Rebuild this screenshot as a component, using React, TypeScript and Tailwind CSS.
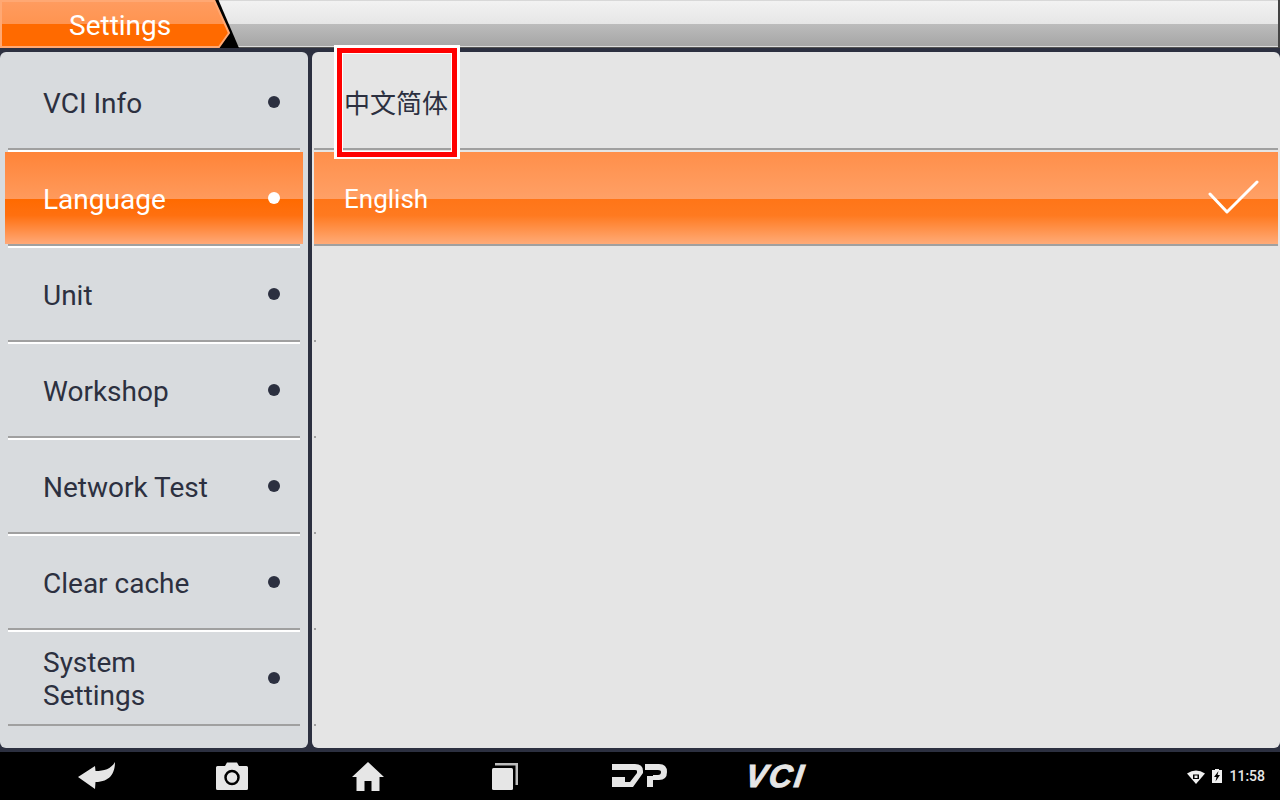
const rows = ["VCI Info", "Language", "Unit", "Workshop", "Network Test", "Clear cache", "System Settings"];

function Header() {
  return (
    <div className="flex h-[48px] border-r-2 border-[#444444] bg-[linear-gradient(180deg,#d8d8d8_0px,#d8d8d8_1px,#f2f2f2_1px,#e6e6e6_24px,#bcbcbc_24px,#a6a6a6_46px,#dcdcdc_46px,#dcdcdc_47px,#555555_47px)]">
      <div className="relative w-[240px] h-[48px] shrink-0">
        <svg width="240" height="48" viewBox="0 0 240 48" className="block">
          <defs>
            <linearGradient id="tab" gradientUnits="userSpaceOnUse" x1="0" y1="0" x2="0" y2="48">
              <stop offset="0" stopColor="#ff9c60" />
              <stop offset="0.5" stopColor="#ff9450" />
              <stop offset="0.5" stopColor="#ff6a00" />
              <stop offset="1" stopColor="#ff6a00" />
            </linearGradient>
          </defs>
          <polygon points="215,0 218.5,0 239,48 216,48" fill="#000000" />
          <polygon points="1,1 214.5,1 229,33 219,47 1,47" fill="url(#tab)" stroke="#ffa873" strokeWidth="2" strokeLinejoin="miter" />
        </svg>
        <span className="absolute left-[69px] top-[8px] text-[28px] leading-[36px] text-white font-['Roboto',sans-serif]">Settings</span>
      </div>
    </div>
  );
}

function Sidebar() {
  return (
    <div className="w-[308px] shrink-0 bg-[#d8dbde] rounded-[6px] pt-[2px] overflow-hidden">
      {rows.map((r, i) => {
        const active = i === 1;
        return (
          <div key={r} className="relative h-[96px] flex flex-col">
            <div className={i === 0 ? "h-[2px] mx-[8px]" : "h-[2px] mx-[8px] bg-white"} />
            <div
              className={
                active
                  ? "flex-1 flex items-center pl-[38px] pr-[23px] mx-[5px] text-white bg-[linear-gradient(180deg,#ff8438_0%,#ff9a5c_51%,#ff6a00_51%,#ff7010_69%,#ffa978_100%)]"
                  : "flex-1 flex items-center pl-[43px] pr-[28px] text-[#2c3040]"
              }
            >
              <span className="flex-1 pt-[2px] text-[28px] leading-[33px] w-[200px] font-['Roboto',sans-serif]">
                {r === "System Settings" ? <>System<br />Settings</> : r}
              </span>
              <div className={active ? "w-[12px] h-[12px] rounded-full bg-white" : "w-[12px] h-[12px] rounded-full bg-[#2c3040]"} />
            </div>
            <div className="h-[2px] mx-[8px] bg-[#a0a0a0]" />
          </div>
        );
      })}
    </div>
  );
}

function Content() {
  return (
    <div className="flex-1 bg-[#e5e5e5] rounded-[6px] pt-[2px] overflow-hidden">
      <div className="h-[96px] flex flex-col px-[2px]">
        <div className="flex-1 flex items-center pl-[30px] pt-[6px] text-[26px] text-[#2c3040] font-['Roboto','Noto_Sans_CJK_SC',sans-serif]">中文简体</div>
        <div className="h-[2px] bg-[#a0a0a0]" />
      </div>
      <div className="h-[96px] flex flex-col px-[2px]">
        <div className="flex-1 mt-[2px] flex items-center justify-between pl-[30px] pr-[18px] text-[26px] text-white bg-[linear-gradient(180deg,#ff8f4a_0%,#ffa066_51%,#ff7518_51%,#ff7a20_69%,#ffab78_100%)] font-['Roboto',sans-serif]">
          <span className="pt-[2px]">English</span>
          <svg width="52" height="36" viewBox="0 0 52 36" fill="none">
            <path d="M2 14 L19 32 L49 2" stroke="#fff" strokeWidth="3" strokeLinecap="round" strokeLinejoin="round" />
          </svg>
        </div>
        <div className="h-[2px] bg-[#a0a0a0]" />
      </div>
      {[0, 1, 2, 3, 4].map((n) => (
        <div key={n} className="h-[96px] flex flex-col justify-end px-[2px]">
          <div className="h-[2px] w-[2px] bg-[#a0a0a0]" />
        </div>
      ))}
    </div>
  );
}

function BottomBar() {
  return (
    <div className="h-[48px] bg-black flex items-center">
      <div className="w-[164px] flex justify-center pl-[30px] pr-0">
        <svg width="38" height="28" viewBox="0 0 38 28" fill="#e6e6e6">
          <path d="M0 15 L17 4 L17.5 9 C26 9 33 7 37 0 C37 11 32 20 17.5 20 L17 27 Z" />
        </svg>
      </div>
      <div className="w-[136px] flex justify-center">
        <svg width="32" height="28" viewBox="0 0 32 28">
          <path d="M1.5 4 H9 L11 0.5 H21 L23 4 H30.5 A1.5 1.5 0 0 1 32 5.5 V26.5 A1.5 1.5 0 0 1 30.5 28 H1.5 A1.5 1.5 0 0 1 0 26.5 V5.5 A1.5 1.5 0 0 1 1.5 4 Z" fill="#e6e6e6" />
          <circle cx="16" cy="15.5" r="6.5" fill="#e6e6e6" stroke="#000" strokeWidth="2.5" />
        </svg>
      </div>
      <div className="w-[136px] flex justify-center">
        <svg width="32" height="29" viewBox="0 0 32 29" fill="#e6e6e6">
          <path d="M16 0 L32 15 H27.5 V29 H19.5 V19 H12.5 V29 H4.5 V15 H0 Z" />
        </svg>
      </div>
      <div className="w-[136px] flex justify-center">
        <svg width="28" height="28" viewBox="0 0 28 28">
          <path d="M5 1 H28 V23 H25.5 V3.5 H5 Z" fill="#bdbdbd" />
          <rect x="2" y="6" width="21" height="22" rx="1.5" fill="#e6e6e6" />
        </svg>
      </div>
      <div className="w-[136px] flex justify-center">
        <svg width="56" height="24" viewBox="0 0 56 24" fill="#e6e6e6">
          <path d="M0 0 H23 Q31 0 31 7 V9 L21 23 H0 V13 H13 V18 H18 L25 9 V7 Q25 6 23 6 H0 Z" />
          <path d="M33 0 H47 Q55 0 55 8 Q55 16 47 16 H41 V11 H46 Q49 11 49 8 Q49 6 46 6 H33 Z" />
          <rect x="35" y="12" width="6" height="11" />
        </svg>
      </div>
      <div className="w-[136px] flex justify-center">
        <span className="inline-block -skew-x-[8deg] text-[32px] leading-[24px] font-bold italic text-[#e6e6e6] font-['Liberation_Sans',sans-serif] tracking-[2px] [-webkit-text-stroke:1px_#e6e6e6]">VCI</span>
      </div>
      <div className="flex-1 flex items-center justify-end pr-[15px] gap-[7px]">
        <svg width="18" height="15" viewBox="0 0 18 15">
          <path d="M9 15 L0 4.5 Q9 -1.5 18 4.5 Z" fill="#f0f0f0" />
          <rect x="6" y="5.5" width="6" height="4.5" fill="#000" />
          <rect x="7.5" y="6.5" width="3" height="2.5" fill="#f0f0f0" />
        </svg>
        <svg width="10" height="14" viewBox="0 0 10 14">
          <path d="M3 0 H7 V1 H10 V14 H0 V1 H3 Z" fill="#f0f0f0" />
          <path d="M6.5 2 L2 8 H4.5 L3.5 12.5 L8 6 H5.5 Z" fill="#000" />
        </svg>
        <span className="text-[14px] font-medium text-[#e6e6e6] font-['Roboto',sans-serif]">11:58</span>
      </div>
    </div>
  );
}

export default function App() {
  return (
    <div className="relative w-[1280px] h-[800px] overflow-hidden bg-[#2c3040] flex flex-col">
      <Header />
      <div className="flex-1 flex gap-[4px] py-[4px]">
        <Sidebar />
        <Content />
      </div>
      <BottomBar />
      <div className="absolute left-[334px] top-[45px] w-[126px] h-[114px] border-[3px] border-b-[2px] border-white">
        <div className="w-full h-full border-[5px] border-[#ff0000]">
          <div className="w-full h-full border border-white" />
        </div>
      </div>
    </div>
  );
}
